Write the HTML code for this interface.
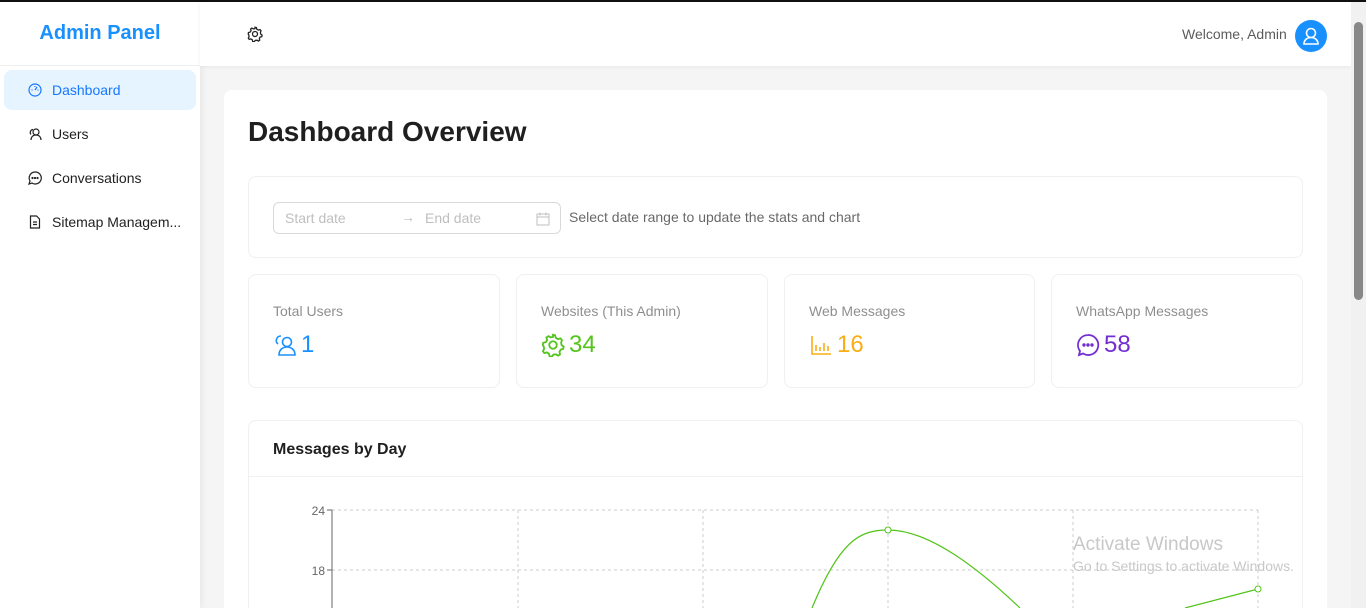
<!DOCTYPE html>
<html style="overflow:hidden;height:608px"><head><meta charset="utf-8"><style>
*{box-sizing:border-box;margin:0;padding:0}
body{width:1366px;height:608px;overflow:hidden;font-family:"Liberation Sans",sans-serif;background:#f5f5f5;position:relative;color:rgba(0,0,0,.88)}
.topline{position:absolute;left:0;top:0;width:1366px;height:2px;background:#111}
.side{position:absolute;left:0;top:2px;width:200px;height:606px;background:#fff;box-shadow:2px 0 6px rgba(0,0,0,.06)}
.logo{height:64px;border-bottom:1px solid #eee;display:flex;align-items:center;justify-content:center;color:#1890ff;font-size:20px;font-weight:bold}
.item{position:absolute;left:4px;width:192px;height:40px;border-radius:8px;display:flex;align-items:center;padding-left:24px;font-size:14px;gap:10px}
.item.act{background:#e6f4ff;color:#1677ff}
.hdr{position:absolute;left:200px;top:2px;width:1151px;height:64px;background:#fff;box-shadow:0 1px 4px rgba(0,0,0,.06)}
.sb{position:absolute;left:1351px;top:2px;width:15px;height:606px;background:#f1f1f1}
.card{position:absolute;background:#fff;border:1px solid #f0f0f0;border-radius:8px}
.lbl{position:absolute;left:24px;top:28px;font-size:14px;color:rgba(0,0,0,.45)}
.val{position:absolute;left:24px;top:56px;font-size:24px;display:flex;align-items:center;gap:4px}
</style></head><body>
<div class="topline"></div>
<div class="side">
<div class="logo">Admin Panel</div>
<div class="item act" style="top:68px"><svg width="14" height="14" viewBox="0 0 14 14" fill="none" stroke="#1677ff" stroke-width="1.2"><circle cx="7" cy="7" r="6"/><path d="M7 7l2-3M3.5 7h1M9.5 7h1M7 3v1"/></svg>Dashboard</div>
<div class="item" style="top:112px"><svg width="14" height="14" viewBox="0 0 14 14" fill="none" stroke="#222" stroke-width="1.2"><circle cx="8" cy="5" r="3"/><path d="M3 13c0-3 2-5 5-5s5 2 5 5M5 2.5a3 3 0 0 0-2 5"/></svg>Users</div>
<div class="item" style="top:156px"><svg width="14" height="14" viewBox="0 0 14 14" fill="none" stroke="#222" stroke-width="1.2"><path d="M7 1a6 6 0 1 1-3 11l-3 1 1-3A6 6 0 0 1 7 1z"/><circle cx="4.5" cy="7" r=".5" fill="#222"/><circle cx="7" cy="7" r=".5" fill="#222"/><circle cx="9.5" cy="7" r=".5" fill="#222"/></svg>Conversations</div>
<div class="item" style="top:200px"><svg width="14" height="14" viewBox="0 0 14 14" fill="none" stroke="#222" stroke-width="1.2"><path d="M2.5 1h6l3 3v9h-9z M5 7h4M5 9.5h4"/></svg>Sitemap Managem...</div>
</div>
<div class="hdr">
<svg style="position:absolute;left:47px;top:24px" width="16" height="16" viewBox="0 0 16 16" fill="none" stroke="#222" stroke-width="1.3"><circle cx="8" cy="8" r="2.5"/><path d="M8 1.2l1.4.3.4 1.7 1.5.9 1.7-.5 1 1.2-.6 1.6.3 1.6 1.4 1.1-.3 1.5-1.7.5-.8 1.4.4 1.7-1.3.9-1.5-.9-1.6.2-1.1 1.4-1.5-.3-.4-1.7-1.4-.9-1.7.5-.9-1.3.8-1.5-.3-1.6L1.2 8l.3-1.5 1.7-.4.9-1.4-.5-1.7 1.3-.9 1.5.8 1.6-.3z"/></svg>
<span style="position:absolute;left:982px;top:24px;font-size:14px;color:rgba(0,0,0,.65)">Welcome, Admin</span>
<div style="position:absolute;left:1095px;top:18px;width:32px;height:32px;border-radius:50%;background:#1890ff"><svg width="32" height="32" viewBox="0 0 32 32" fill="none" stroke="#fff" stroke-width="1.6"><circle cx="16" cy="13" r="4.5"/><path d="M9 24c0-4 3-6.5 7-6.5s7 2.5 7 6.5z"/></svg></div>
</div>
<div class="sb"><div style="position:absolute;left:3px;top:20px;width:9px;height:278px;background:#888;border-radius:5px"></div></div>
<div style="position:absolute;left:224px;top:90px;width:1103px;height:518px;background:#fff;border-radius:8px 8px 0 0"></div>
<div style="position:absolute;left:248px;top:116px;font-size:28px;font-weight:bold">Dashboard Overview</div>
<div class="card" style="left:248px;top:176px;width:1055px;height:82px">
<div style="position:absolute;left:24px;top:25px;width:288px;height:32px;border:1px solid #d9d9d9;border-radius:6px;font-size:14px;color:#bfbfbf">
<span style="position:absolute;left:11px;top:7px">Start date</span><span style="position:absolute;left:127px;top:6px">→</span><span style="position:absolute;left:151px;top:7px">End date</span>
<svg style="position:absolute;left:262px;top:9px" width="14" height="14" viewBox="0 0 14 14" fill="none" stroke="#bfbfbf"><rect x="1" y="2" width="12" height="11"/><path d="M1 5h12M4 0.5v3M10 0.5v3"/></svg></div>
<span style="position:absolute;left:320px;top:32px;font-size:14px;color:rgba(0,0,0,.6)">Select date range to update the stats and chart</span>
</div>
<div class="card" style="left:248px;top:274px;width:252px;height:114px"><div class="lbl">Total Users</div><div class="val" style="color:#1890ff"><svg width="24" height="24" viewBox="0 0 24 24" fill="none" stroke="#1890ff" stroke-width="1.6"><circle cx="14" cy="9" r="4.5"/><path d="M6 22c0-5 3.5-8 8-8s8 3 8 8z M8 3a4.5 4.5 0 0 0-3 8"/></svg>1</div></div>
<div class="card" style="left:516px;top:274px;width:252px;height:114px"><div class="lbl">Websites (This Admin)</div><div class="val" style="color:#52c41a"><svg width="24" height="24" viewBox="0 0 16 16" fill="none" stroke="#52c41a" stroke-width="1.2"><circle cx="8" cy="8" r="2.5"/><path d="M8 1.2l1.4.3.4 1.7 1.5.9 1.7-.5 1 1.2-.6 1.6.3 1.6 1.4 1.1-.3 1.5-1.7.5-.8 1.4.4 1.7-1.3.9-1.5-.9-1.6.2-1.1 1.4-1.5-.3-.4-1.7-1.4-.9-1.7.5-.9-1.3.8-1.5-.3-1.6L1.2 8l.3-1.5 1.7-.4.9-1.4-.5-1.7 1.3-.9 1.5.8 1.6-.3z"/></svg>34</div></div>
<div class="card" style="left:784px;top:274px;width:251px;height:114px"><div class="lbl">Web Messages</div><div class="val" style="color:#faad14"><svg width="24" height="24" viewBox="0 0 24 24" fill="none" stroke="#faad14" stroke-width="1.6"><path d="M3 3v18h19M7 18v-6M11 18v-4M15 18v-8M19 18v-5"/></svg>16</div></div>
<div class="card" style="left:1051px;top:274px;width:252px;height:114px"><div class="lbl">WhatsApp Messages</div><div class="val" style="color:#722ed1"><svg width="24" height="24" viewBox="0 0 24 24" fill="none" stroke="#722ed1" stroke-width="1.8"><path d="M12 2a10 10 0 1 1-5 18.5L3 22l1-4A10 10 0 0 1 12 2z"/><circle cx="8" cy="12" r=".8" fill="#722ed1"/><circle cx="12" cy="12" r=".8" fill="#722ed1"/><circle cx="16" cy="12" r=".8" fill="#722ed1"/></svg>58</div></div>
<div class="card" style="left:248px;top:420px;width:1055px;height:188px;border-bottom:none;border-radius:8px 8px 0 0">
<div style="height:56px;border-bottom:1px solid #f0f0f0;padding:20px 24px;font-size:16px;font-weight:bold">Messages by Day</div></div>
<svg style="position:absolute;left:0;top:0" width="1351" height="608">
<g stroke="#ccc" stroke-dasharray="3 3"><path d="M332 510H1258M332 570H1258M518 510V608M703 510V608M888 510V608M1073 510V608M1258 510V608"/></g>
<path d="M332 510V608M327 510h5M327 570h5" stroke="#666"/>
<text x="325" y="515" font-size="12" fill="#666" text-anchor="end" font-family="Liberation Sans">24</text>
<text x="325" y="575" font-size="12" fill="#666" text-anchor="end" font-family="Liberation Sans">18</text>
<path d="M812 608C840 540 860 530 888 530C930 530 980 570 1020 608M1185 608L1258 589" fill="none" stroke="#52c41a" stroke-width="1.2"/>
<circle cx="888" cy="530" r="3" fill="#fff" stroke="#52c41a"/><circle cx="1258" cy="589" r="3" fill="#fff" stroke="#52c41a"/>
<text x="1073" y="550" font-size="19" fill="#c8c8c8" font-family="Liberation Sans">Activate Windows</text>
<text x="1073" y="571" font-size="14" fill="#c8c8c8" font-family="Liberation Sans">Go to Settings to activate Windows.</text>
</svg>
</body></html>
